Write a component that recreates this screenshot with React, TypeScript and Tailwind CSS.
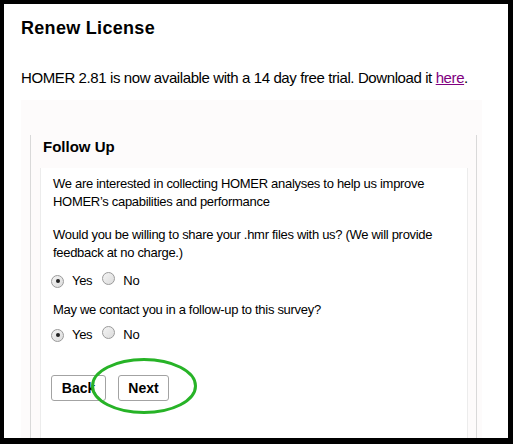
import React from "react";

function Radio({ checked }: { checked?: boolean }) {
  return (
    <span className="relative inline-flex h-[13px] w-[13px] items-center justify-center rounded-full border border-[#9a9a9a] bg-gradient-to-br from-[#f4f4f4] to-[#dcdcdc]">
      {checked && <span className="h-[4px] w-[4px] rounded-full bg-[#222]" />}
    </span>
  );
}

function RadioRow({ className }: { className?: string }) {
  return (
    <div className={"flex h-[18px] items-center text-[13px] " + (className ?? "")}>
      <Radio checked />
      <span className="ml-[8px]">Yes</span>
      <span className="ml-[10px]">
        <Radio />
      </span>
      <span className="ml-[8px]">No</span>
    </div>
  );
}

export default function App() {
  return (
    <div
      className="h-[444px] w-[513px] bg-black pb-[6px] pl-[4px] pr-[5px] pt-[4px] text-black"
      style={{ fontFamily: '"Liberation Sans", Arial, sans-serif' }}
    >
      <div className="h-full overflow-hidden bg-white px-[17px]">
        <h1 className="mt-[13px] text-[18px] font-bold leading-[22px] tracking-[0.3px]">Renew License</h1>
        <p className="mt-[30px] whitespace-nowrap text-[15px] leading-[18px] tracking-[-0.4px]">
          HOMER 2.81 is now available with a 14 day free trial. Download it{" "}
          <a className="text-[#800080] underline">here</a>.
        </p>

        <div className="mt-[13px] w-[461px] bg-[#fdfbfb] pl-[9px] pr-[5px] pt-[35px]">
          <div className="border-l border-r border-[#d9d9d9] pt-[3px]">
            <h2 className="pl-[12px] text-[15px] font-bold leading-[18px]">Follow Up</h2>
            <div className="ml-[9px] mr-[8px] mt-[12px] h-[300px] border-l border-r border-[#ececec] bg-white pl-[10px] pt-[7px] text-[13px] leading-[18px] tracking-[-0.3px]">
              <p className="pl-[2px]">
                We are interested in collecting HOMER analyses to help us improve
                <br />
                HOMER&rsquo;s capabilities and performance
              </p>
              <p className="mt-[15px] pl-[2px]">
                Would you be willing to share your .hmr files with us? (We will provide
                <br />
                feedback at no charge.)
              </p>
              <RadioRow className="mt-[10px]" />
              <p className="mt-[11px] pl-[2px]">May we contact you in a follow-up to this survey?</p>
              <RadioRow className="mt-[7px]" />
              <div className="relative mt-[31px] flex gap-[12px] tracking-normal">
                <button className="h-[26px] w-[55px] rounded-[3px] border border-[#a3a3a3] bg-white text-[14px] font-bold">
                  Back
                </button>
                <button className="h-[26px] w-[51px] rounded-[3px] border border-[#a3a3a3] bg-white text-[14px] font-bold">
                  Next
                </button>
                <svg
                  className="pointer-events-none absolute left-[40px] top-[-21px]"
                  width="110"
                  height="64"
                  viewBox="0 0 110 64"
                >
                  <ellipse cx="53" cy="32" rx="51.5" ry="26.5" fill="none" stroke="#27b327" strokeWidth="3" />
                </svg>
              </div>
            </div>
          </div>
        </div>
      </div>
    </div>
  );
}
